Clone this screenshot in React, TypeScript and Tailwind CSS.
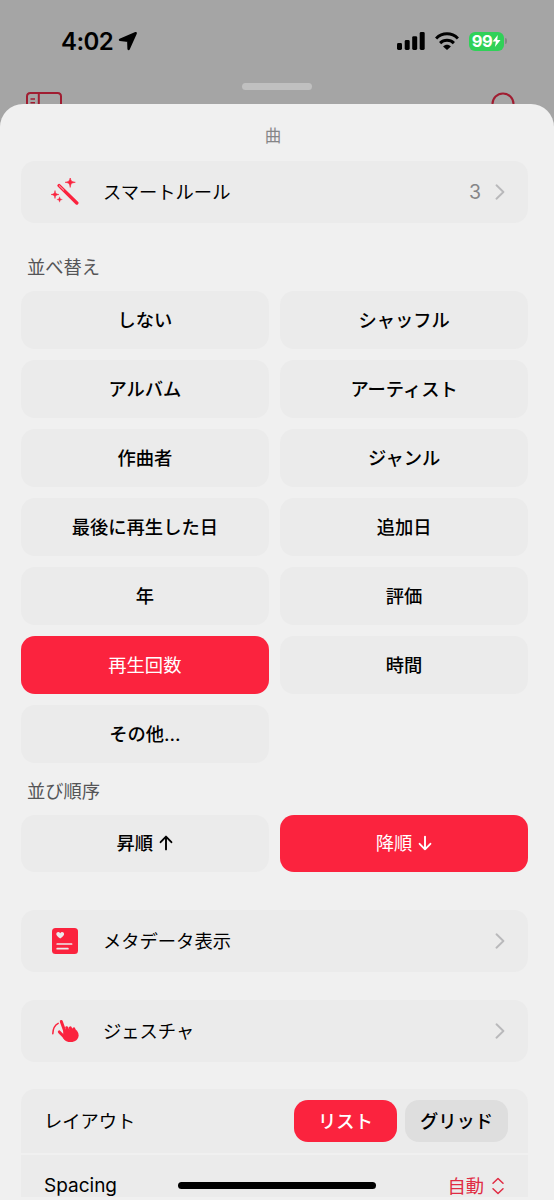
import { useState } from "react";
import type { ReactNode } from "react";
import clsx from "clsx";

const sortOptions = [
  "しない",
  "シャッフル",
  "アルバム",
  "アーティスト",
  "作曲者",
  "ジャンル",
  "最後に再生した日",
  "追加日",
  "年",
  "評価",
  "再生回数",
  "時間",
  "その他...",
];

const ArrowIcon = ({ down }: { down?: boolean }) => (
  <svg
    viewBox="0 0 14 16"
    className={clsx("h-4 w-3.5", down && "rotate-180")}
    fill="none"
    stroke="currentColor"
    strokeWidth="1.9"
    strokeLinecap="round"
    strokeLinejoin="round"
  >
    <path d="M7 14.4V1.8M1.6 7.2 7 1.7l5.4 5.5" />
  </svg>
);

const ChevronIcon = () => (
  <svg
    viewBox="0 0 10 16"
    className="h-4 w-2.5 text-[#b9b9bb]"
    fill="none"
    stroke="currentColor"
    strokeWidth="1.9"
    strokeLinecap="round"
    strokeLinejoin="round"
  >
    <path d="M1.5 1.3 8.4 8l-6.9 6.7" />
  </svg>
);

const WandIcon = () => (
  <svg viewBox="0 0 28 28" className="size-7" fill="currentColor">
    <path d="M8.1 7.6 25.8 25" stroke="currentColor" strokeWidth="3.4" strokeLinecap="round" />
    <path d="M8.3 7.8 12.6 12" stroke="#ebebeb" strokeWidth=".8" strokeLinecap="round" />
    <path d="M19.2-.8c.6 3.9 1.2 4.5 5.1 5.1-3.9.6-4.5 1.2-5.1 5.1-.6-3.9-1.2-4.5-5.1-5.1 3.9-.6 4.5-1.2 5.1-5.1Z" stroke="currentColor" strokeWidth=".6" />
    <path d="M4 12.5c.5 3.1.9 3.5 4 4-3.1.5-3.5.9-4 4-.5-3.1-.9-3.5-4-4 3.1-.5 3.5-.9 4-4Z" stroke="currentColor" strokeWidth=".5" />
    <path d="M8.6 18.8c.4 2 .7 2.3 2.7 2.7-2 .4-2.3.7-2.7 2.7-.4-2-.7-2.3-2.7-2.7 2-.4 2.3-.7 2.7-2.7Z" stroke="currentColor" strokeWidth=".4" />
  </svg>
);

const MetadataIcon = () => (
  <svg viewBox="0 0 26 26" className="size-[26px]">
    <rect width="26" height="26" rx="3.5" fill="currentColor" />
    <path
      d="M8.2 10.5C5.500 8.700 4.300 7.600 4.300 6.100c0-2.300 2.800-2.800 3.900-.9 1.100-1.900 3.900-1.400 3.900.9 0 1.500-1.200 2.600-3.900 4.400Z"
      fill="#ebebeb"
    />
    <path d="M5.200 16H19.600M5.200 20.700H15.900" stroke="#ebebeb" strokeWidth="1.7" strokeLinecap="round" />
  </svg>
);

const GestureIcon = () => (
  <svg
    viewBox="0 0 28 24"
    className="h-6 w-7"
    fill="none"
    stroke="currentColor"
    strokeLinecap="round"
  >
    <path d="M1.8 14.8C1.900 9.900 3.900 6 7.200 4.300" strokeWidth="1.5" />
    <path d="M10.300 2.500 14.800 15" strokeWidth="3" />
    <path d="M8.300 12.900 15 19.800" strokeWidth="2.900" />
    <path d="M15.700 8.700 18 14M19.300 8.900 21 13M22.800 9.900 24.200 14" strokeWidth="3" />
    <path
      d="M12.500 10.200 24.400 10.500c2 1.300 3.200 3.300 3.200 5.800 0 4-3.500 6.800-7.800 6.800-3.400 0-5.800-1.300-7.900-4.200Z"
      fill="currentColor"
      stroke="none"
    />
  </svg>
);

const StatusBar = () => (
  <div className="flex h-[83px] items-start justify-between pt-[27px] pr-[47px] pl-[61px] text-black">
    <div className="flex h-7 items-center gap-[5px]">
      <span className="mt-0.5 text-[24px] leading-7 font-semibold tracking-[-0.6px]">4:02</span>
      <svg
        viewBox="0 0 20 20"
        className="size-5"
        fill="currentColor"
        stroke="currentColor"
        strokeWidth="2.4"
        strokeLinejoin="round"
      >
        <path d="M17.700 2.200 2 8.900l8.300.9.300 8.200Z" />
      </svg>
    </div>
    <div className="flex h-7 items-center">
      <svg viewBox="0 0 28 18" className="h-[18px] w-7" fill="currentColor">
        <rect x="0" y="11" width="5" height="7" rx="1.4" />
        <rect x="7.700" y="8" width="5" height="10" rx="1.4" />
        <rect x="15.200" y="4.200" width="5" height="13.800" rx="1.4" />
        <rect x="22.700" y="0" width="5" height="18" rx="1.4" />
      </svg>
      <svg
        viewBox="0 0 24 18"
        className="ml-2.5 h-[18px] w-6"
        fill="none"
        stroke="currentColor"
        strokeWidth="3"
      >
        <path d="M1.100 6.500C7.300.3 16.700.3 22.900 6.500" />
        <path d="M5.100 11.100c3.900-3.800 9.900-3.800 13.800 0" />
        <path d="M8.100 14.400c2.200-2.100 5.600-2.100 7.800 0L12 18Z" fill="currentColor" stroke="none" />
      </svg>
      <div className="ml-2.5 flex h-[19px] w-[35px] items-center justify-center rounded-md bg-[#30d158] text-white">
        <span className="text-[16.5px] leading-none font-bold tracking-[-0.4px]">99</span>
        <svg viewBox="0 0 10 14" className="h-3 w-[9px]" fill="currentColor">
          <path d="M6.500 0 0.500 7.700h3.800L3.100 14 9.700 5.700H5.900Z" />
        </svg>
      </div>
      <span className="ml-px h-1.5 w-0.5 rounded-r-full bg-[#818983]" />
    </div>
  </div>
);

const LinkRow = ({ icon, label, value }: { icon: ReactNode; label: string; value?: number }) => (
  <button
    type="button"
    className="flex h-[62px] w-full items-center rounded-[14px] bg-[#ebebeb] pr-[23px] text-left"
  >
    <span className="flex w-[82px] items-center justify-center pl-[5px] text-[#fb233e]">{icon}</span>
    <span className="flex-1">{label}</span>
    {value !== undefined && (
      <span className="mr-[14px] text-[19.5px] text-[#858587]">{value}</span>
    )}
    <ChevronIcon />
  </button>
);

const OptionButton = ({
  selected,
  onClick,
  children,
}: {
  selected: boolean;
  onClick: () => void;
  children: ReactNode;
}) => (
  <button
    type="button"
    onClick={onClick}
    className={clsx(
      "flex h-[57.5px] items-center justify-center gap-1.5 rounded-[14px]",
      selected ? "bg-[#fb233e] text-white" : "bg-[#ebebeb] font-medium text-black"
    )}
  >
    {children}
  </button>
);

export default function App() {
  const [sort, setSort] = useState("再生回数");
  const [descending, setDescending] = useState(true);
  const [layout, setLayout] = useState("リスト");

  return (
    <div className="flex h-[1200px] w-[554px] flex-col overflow-hidden bg-[#a5a5a5] font-[Inter,'Noto_Sans_CJK_JP',sans-serif] text-[18.3px] leading-7 text-black">
      <StatusBar />
      <div className="flex h-[21px] shrink-0 items-start justify-between pr-[39px] pl-[26px] text-[#a01d31]">
        <svg viewBox="0 0 36 12" className="mt-[9px] h-3 w-9" fill="none" stroke="currentColor">
          <path d="M1 12V4.500Q1 1 4.500 1h27Q35 1 35 4.500V12M12.800 1v11" strokeWidth="2" />
          <path d="M4.500 7H9M4.500 10.800H9" strokeWidth="1.4" />
        </svg>
        <div className="h-[7px] w-[70px] rounded-full bg-[#c0c0c0]" />
        <svg viewBox="0 0 24 12" className="mt-[9px] h-3 w-6" fill="none" stroke="currentColor">
          <circle cx="12" cy="12" r="10.5" strokeWidth="2" />
        </svg>
      </div>

      <main className="relative h-[1096px] shrink-0 overflow-hidden rounded-t-[23px] bg-[#f0f0f0] pr-[26px] pl-[21px]">
        <h1 className="flex h-[57px] items-center justify-center pt-[6px] pr-[3px] text-[16.5px] text-[#858587]">
          曲
        </h1>
        <LinkRow icon={<WandIcon />} label="スマートルール" value={3} />

        <h2 className="mt-[30px] mb-[10px] pl-1.5 text-[#555557]">並べ替え</h2>
        <div className="grid grid-cols-2 gap-[11.5px]">
          {sortOptions.map((option) => (
            <OptionButton key={option} selected={sort === option} onClick={() => setSort(option)}>
              {option}
            </OptionButton>
          ))}
        </div>

        <h2 className="mt-[14.5px] mb-[9.5px] pl-1.5 text-[#555557]">並び順序</h2>
        <div className="grid grid-cols-2 gap-[11.5px]">
          <OptionButton selected={!descending} onClick={() => setDescending(false)}>
            昇順 <ArrowIcon />
          </OptionButton>
          <OptionButton selected={descending} onClick={() => setDescending(true)}>
            降順 <ArrowIcon down />
          </OptionButton>
        </div>

        <div className="mt-[38px] flex flex-col gap-7">
          <LinkRow icon={<MetadataIcon />} label="メタデータ表示" />
          <LinkRow icon={<GestureIcon />} label="ジェスチャ" />
        </div>

        <section className="mt-[27px] flex flex-col gap-0.5">
          <div className="flex h-16 items-center rounded-t-[14px] bg-[#ebebeb] pr-5 pl-[23px]">
            <span className="flex-1">レイアウト</span>
            <div className="flex gap-2">
              {["リスト", "グリッド"].map((option) => (
                <button
                  key={option}
                  type="button"
                  onClick={() => setLayout(option)}
                  className={clsx(
                    "h-[42px] w-[103px] rounded-[14px] font-medium",
                    layout === option ? "bg-[#fb233e] text-white" : "bg-[#dedede] text-black"
                  )}
                >
                  {option}
                </button>
              ))}
            </div>
          </div>
          <div className="flex h-[42px] items-start bg-[#ebebeb] pt-[17px] pr-[23px] pl-[23px]">
            <span className="flex-1 text-[19px]">Spacing</span>
            <span className="text-[#e02b43]">自動</span>
            <svg
              viewBox="0 0 14 18"
              className="mt-[5px] ml-[7px] h-[18px] w-3.5 text-[#e02b43]"
              fill="none"
              stroke="currentColor"
              strokeWidth="1.5"
              strokeLinecap="round"
              strokeLinejoin="round"
            >
              <path d="M2 6.200 7 1.500l5 4.700M2 11.800l5 4.700 5-4.700" />
            </svg>
          </div>
        </section>

        {/* home indicator */}
        <div className="absolute bottom-[11px] left-[178px] h-[7px] w-[198px] rounded-full bg-black" />
      </main>
    </div>
  );
}
